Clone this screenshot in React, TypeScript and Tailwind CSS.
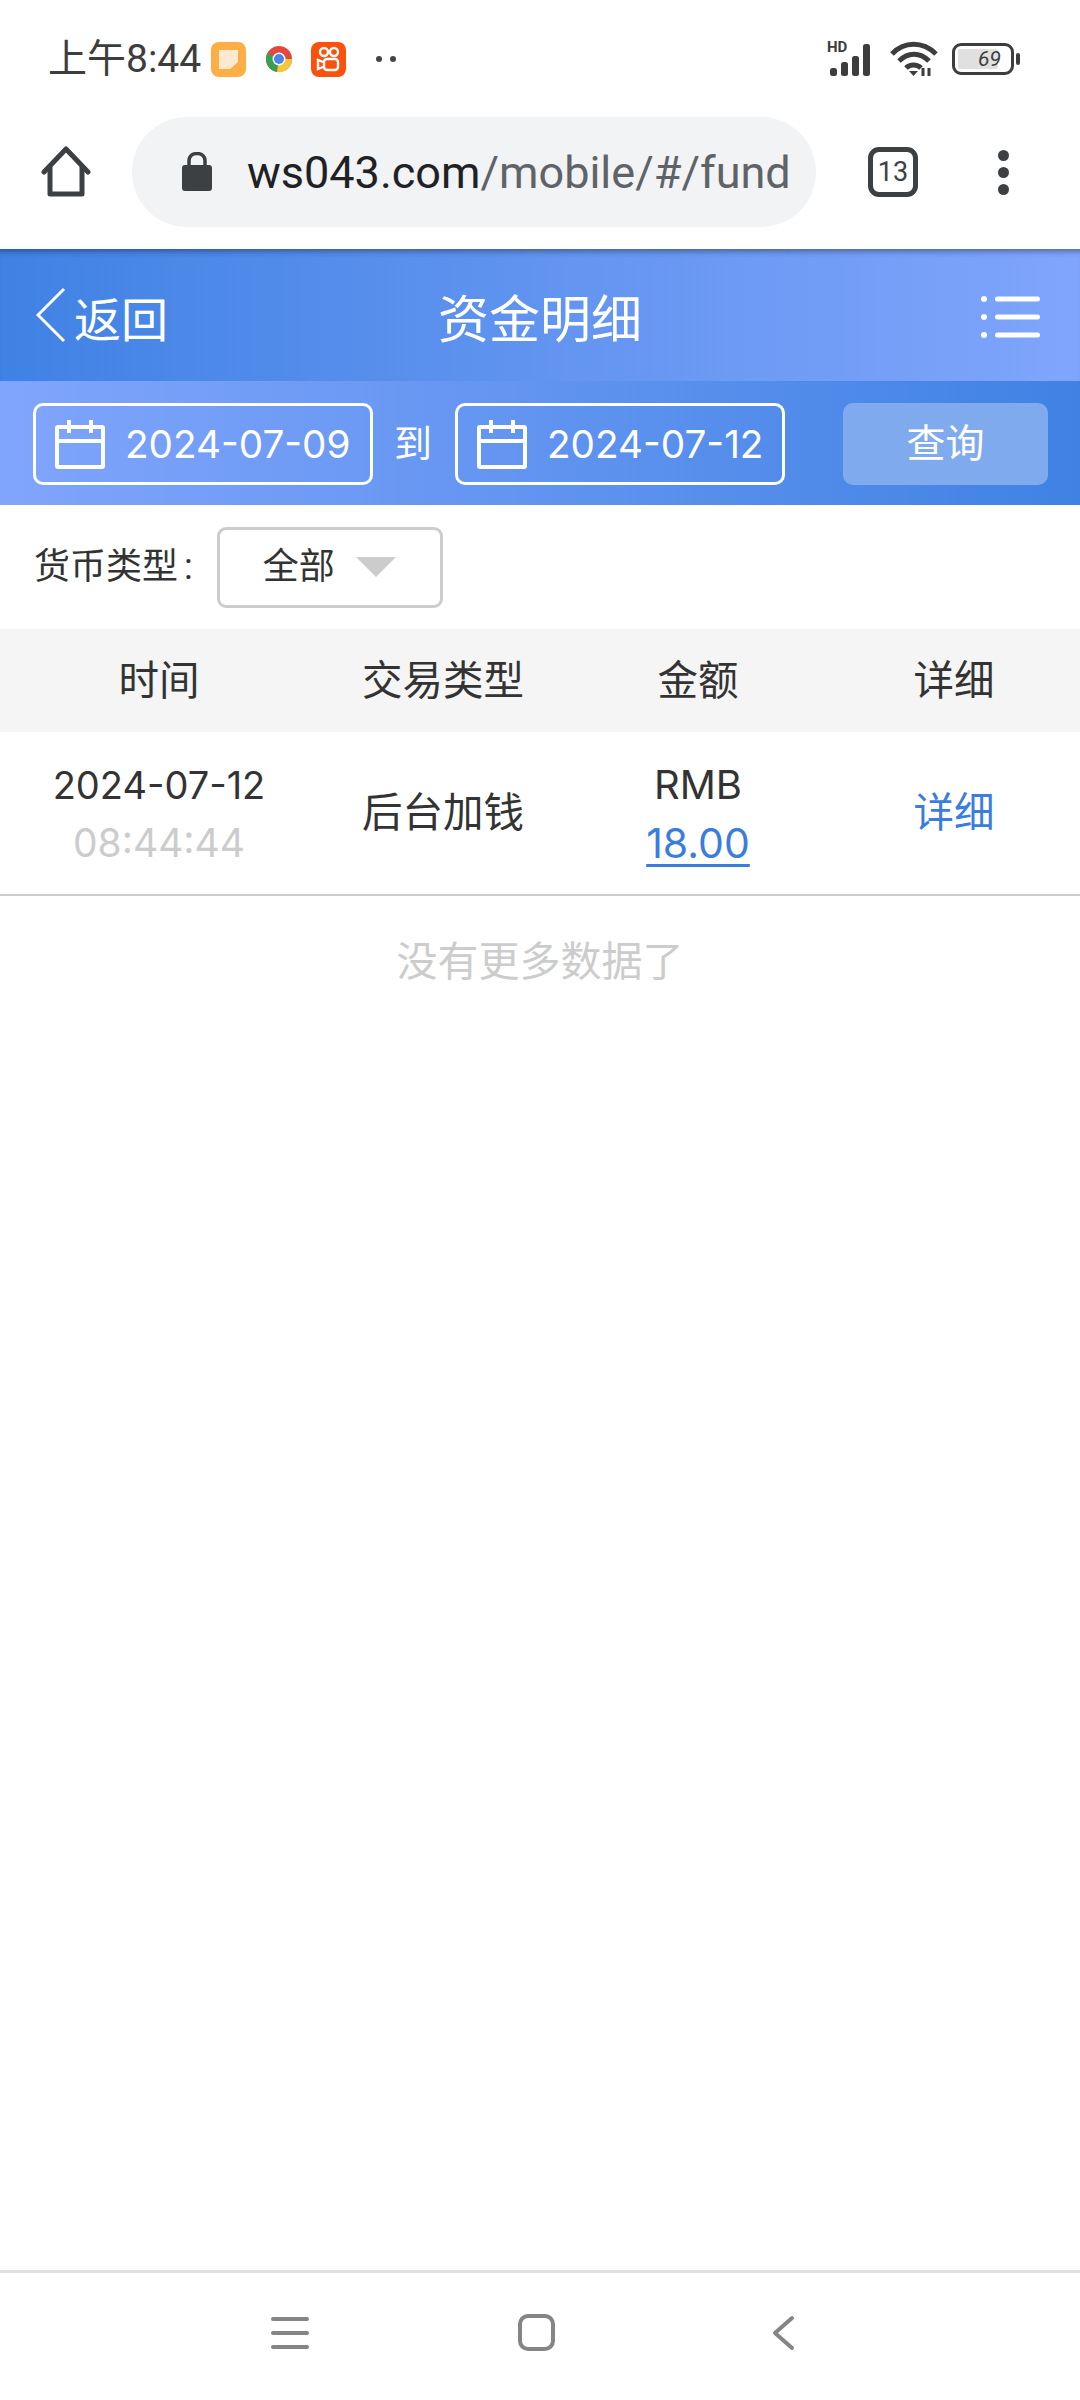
const CJK = 'font-["Roboto","Noto_Sans_CJK_SC",sans-serif]';

function CalendarIcon() {
    return (
        <svg width="50" height="50" viewBox="0 0 50 50" fill="none" stroke="white" strokeWidth="4" className="shrink-0">
            <rect x="2" y="8" width="46" height="40" rx="1" />
            <path d="M2 22H48M14 1V14M36 1V14" />
        </svg>
    );
}

function DateBox({ value, width }: { value: string; width: string }) {
    return (
        <div className={`flex h-[82px] items-center gap-[20px] rounded-[10px] border-[3px] border-white pl-[19px] ${width}`}>
            <CalendarIcon />
            <span className="font-['Inter'] text-[38.7px] leading-none text-white">{value}</span>
        </div>
    );
}

function StatusBar() {
    return (
        <div className="flex h-[115px] items-center justify-between pl-[48px] pr-[60px] pt-[3px]">
            <div className="flex items-center">
                <span className="text-[39px] leading-none text-[#3d3d3d]">上午8:44</span>
                <svg width="35" height="35" viewBox="0 0 35 35" className="ml-[10px]">
                    <rect width="35" height="35" rx="8" fill="#fdae45" />
                    <path d="M8 8H27V20L19 27H8Z" fill="#fde9cf" />
                </svg>
                <svg width="28" height="28" viewBox="0 0 28 28" className="ml-[19px]">
                    <circle cx="14" cy="14" r="13" fill="#e0493b" />
                    <path d="M14 14L2.5 8A13 13 0 0 0 12 27Z" fill="#3a9f55" />
                    <path d="M14 14H27A13 13 0 0 1 12 27Z" fill="#f5c73d" />
                    <circle cx="14" cy="14" r="6.5" fill="white" />
                    <circle cx="14" cy="14" r="5" fill="#4a86e8" />
                </svg>
                <svg width="35" height="35" viewBox="0 0 35 35" className="ml-[18px]">
                    <rect width="35" height="35" rx="8" fill="#f9520c" />
                    <g fill="none" stroke="white" strokeWidth="2.4">
                        <circle cx="13" cy="10" r="4" />
                        <circle cx="23" cy="10" r="4" />
                        <rect x="13" y="17" width="14" height="11" rx="3" />
                        <path d="M12 20L7 18V27L12 25" />
                    </g>
                </svg>
                <div className="ml-[30px] flex gap-[8px]">
                    <div className="size-[6px] rounded-full bg-[#444]" />
                    <div className="size-[6px] rounded-full bg-[#444]" />
                </div>
            </div>
            <div className="flex items-center">
                <div className="relative h-[34px] w-[52px]">
                    <span className="absolute left-0 top-[-2px] text-[15px] font-bold leading-none text-[#3d3d3d]">HD</span>
                    <svg width="50" height="32" viewBox="0 0 50 32" className="absolute left-[2px] top-[2px]" fill="#3d3d3d">
                        <rect x="1" y="24" width="7" height="8" rx="2.5" />
                        <rect x="12" y="18" width="7" height="14" rx="2.5" />
                        <rect x="23" y="12" width="7" height="20" rx="2.5" />
                        <rect x="34" y="0" width="7" height="32" rx="2.5" />
                    </svg>
                </div>
                <svg width="48" height="36" viewBox="0 0 48 36" fill="none" stroke="#3d3d3d" strokeWidth="5" className="ml-[11px]">
                    <path d="M2 13C14 0 33 0 46 13" />
                    <path d="M9 20C18 11 30 11 39 20" />
                    <path d="M16 27C20 23 27 23 31 27" />
                    <path d="M23.5 35L19 30H28Z" fill="#3d3d3d" strokeWidth="0" />
                    <path d="M33 35V27M39 35V27" strokeWidth="3" />
                </svg>
                <div className="ml-[14px] flex items-center">
                    <div className="flex h-[32px] w-[62px] items-center rounded-[9px] border-[3px] border-[#3d3d3d] p-[3px]">
                        <div className="flex h-full w-[40px] items-center justify-end rounded-[2px] bg-[#e0e0e0]">
                            <span className="mr-[-3px] text-[21px] italic leading-none text-[#3d3d3d]">69</span>
                        </div>
                    </div>
                    <div className="ml-[2px] h-[12px] w-[4px] rounded-[2px] bg-[#3d3d3d]" />
                </div>
            </div>
        </div>
    );
}

function BrowserBar() {
    return (
        <div className="flex h-[134px] items-start pt-[2px]">
            <div className="flex h-[110px] w-[132px] items-center pl-[41px]">
                <svg width="50" height="52" viewBox="0 0 50 52" fill="none" stroke="#3c4043" strokeWidth="5" strokeLinejoin="round" strokeLinecap="round">
                    <path d="M3 26L25 3L47 26" />
                    <path d="M9 21V48H41V21" />
                </svg>
            </div>
            <div className="flex h-[110px] w-[684px] items-center rounded-full bg-[#f1f3f4] pl-[50px]">
                <svg width="30" height="40" viewBox="0 0 30 40" fill="#3c4043">
                    <rect y="13" width="30" height="26" rx="3" />
                    <path d="M7 14V9C7 4 10.500 1.500 15 1.500S23 4 23 9V14" fill="none" stroke="#3c4043" strokeWidth="3.500" />
                </svg>
                <span className="ml-[35px] whitespace-nowrap text-[45px] leading-none text-[#202124]">
                    ws043.com<span className="text-[#5f6368]">/mobile/#/fund</span>
                </span>
            </div>
            <div className="flex h-[110px] items-center pl-[52px]">
                <div className="flex size-[50px] items-center justify-center rounded-[11px] border-[5px] border-[#3c4043] text-[27px] leading-none text-[#3c4043]">13</div>
            </div>
            <div className="flex h-[110px] flex-col items-center justify-center gap-[6px] pl-[80px]">
                <div className="size-[11px] rounded-full bg-[#3c4043]" />
                <div className="size-[11px] rounded-full bg-[#3c4043]" />
                <div className="size-[11px] rounded-full bg-[#3c4043]" />
            </div>
        </div>
    );
}

function PageHeader() {
    return (
        <div className="relative flex h-[132px] items-center justify-between bg-linear-to-r from-[#3f82e4] to-[#80a5fc] pl-[36px] pr-[40px] text-white shadow-[inset_0_7px_6px_-5px_rgba(0,0,0,0.4)]">
            <div className="flex items-center">
                <svg width="30" height="56" viewBox="0 0 30 56" fill="none" stroke="white" strokeWidth="3">
                    <path d="M28 2L2 28L28 54" />
                </svg>
                <span className="ml-[8px] pt-[10px] text-[47px] leading-none">返回</span>
            </div>
            <span className="absolute left-1/2 -translate-x-1/2 pt-[11px] text-[51px] leading-none">资金明细</span>
            <svg width="60" height="44" viewBox="0 0 60 44" fill="white" className="mt-[4px]">
                <circle cx="4" cy="4" r="3" />
                <circle cx="4" cy="22" r="3" />
                <circle cx="4" cy="40" r="3" />
                <rect x="15" y="1.500" width="45" height="5" rx="2.500" />
                <rect x="15" y="19.500" width="45" height="5" rx="2.500" />
                <rect x="15" y="37.500" width="45" height="5" rx="2.500" />
            </svg>
        </div>
    );
}

function FilterBar() {
    return (
        <div className="flex h-[124px] items-center bg-linear-to-r from-[#80a5fc] to-[#3f82e4] pl-[33px] pr-[32px] pt-[2px]">
            <DateBox value="2024-07-09" width="w-[340px]" />
            <span className="ml-[21px] text-[38px] leading-none text-white">到</span>
            <DateBox value="2024-07-12" width="ml-[23px] w-[330px]" />
            <div className="ml-auto flex h-[82px] w-[205px] items-center justify-center rounded-[10px] bg-[#7fabee] text-[39px] leading-none text-white">查询</div>
        </div>
    );
}

function CurrencyRow() {
    return (
        <div className="flex h-[124px] items-center pl-[34px]">
            <span className="text-[36px] leading-none text-[#333]">货币类型</span>
            <span className="ml-[6px] text-[36px] leading-none text-[#333]">:</span>
            <div className="ml-[24px] flex h-[81px] w-[226px] items-center rounded-[9px] border-[3px] border-[#ccc] pl-[43px]">
                <span className="text-[36px] leading-none text-[#333]">全部</span>
                <div className="ml-[21px] h-0 w-0 border-x-[20px] border-t-[20px] border-x-transparent border-t-[#ccc]" />
            </div>
        </div>
    );
}

function FundTable() {
    return (
        <>
            <div className="grid h-[103px] grid-cols-[318px_250px_260px_252px] items-center bg-[#f5f5f5] pt-[2px] text-center text-[40.5px] leading-none text-[#333]">
                <span>时间</span>
                <span>交易类型</span>
                <span>金额</span>
                <span>详细</span>
            </div>
            <div className="grid h-[164px] grid-cols-[318px_250px_260px_252px] items-center border-b-2 border-[#ccc] text-center text-[40.5px] leading-[58px] text-[#333]">
                <div className="pt-[2px] font-['Inter'] text-[38px]">
                    <div>2024-07-12</div>
                    <div className="text-[39px] text-[#ccc]">08:44:44</div>
                </div>
                <span>后台加钱</span>
                <div className="pt-[2px] font-['Inter'] text-[40px]">
                    <div>RMB</div>
                    <div className="text-[41px] text-[#3b7ddd] underline decoration-[3px] underline-offset-[6px]">18.00</div>
                </div>
                <span className="text-[#3b7ddd]">详细</span>
            </div>
        </>
    );
}

export default function App() {
    return (
        <div className={`flex h-[2400px] w-[1080px] flex-col overflow-hidden bg-white ${CJK}`}>
            <StatusBar />
            <BrowserBar />
            <PageHeader />
            <FilterBar />
            <CurrencyRow />
            <FundTable />
            <div className="pt-[46px] text-center text-[41px] leading-none text-[#ccc]">没有更多数据了</div>

            <div className="mt-auto flex h-[130px] items-center border-t-[3px] border-[#e0e0e0] pb-[8px] pl-[271px]">
                <div className="flex w-[38px] flex-col gap-[10px]">
                    <div className="h-[4px] rounded-full bg-[#858585]" />
                    <div className="h-[4px] rounded-full bg-[#858585]" />
                    <div className="h-[4px] rounded-full bg-[#858585]" />
                </div>
                <div className="ml-[209px] size-[37px] rounded-[10px] border-[4px] border-[#858585]" />
                <svg width="24" height="36" viewBox="0 0 24 36" fill="none" stroke="#858585" strokeWidth="4" strokeLinecap="round" strokeLinejoin="round" className="ml-[216px]">
                    <path d="M21 3L4 18L21 33" />
                </svg>
            </div>
        </div>
    );
}
